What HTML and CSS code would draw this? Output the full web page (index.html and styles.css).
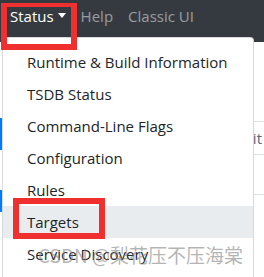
FILE: index.html
```html
<!DOCTYPE html>
<html lang="en">
<head>
<meta charset="utf-8">
<title>Status menu</title>
<link rel="stylesheet" href="styles.css">
</head>
<body>
<div class="page">
  <nav class="navbar">
    <span class="nav-link active">Status<span class="caret"></span></span>
    <span class="nav-link">Help</span>
    <span class="nav-link">Classic UI</span>
  </nav>
  <main class="content">
    <div class="edge">
      <div class="edge-btn edge-btn-a"></div>
      <div class="edge-btn edge-btn-b"></div>
    </div>
    <div class="panel">
      <div class="panel-row row-a"></div>
      <div class="panel-row row-b"><span class="cell-text">Unit</span></div>
      <div class="panel-row row-c"></div>
    </div>
  </main>

  <ul class="dropdown">
    <li class="dropdown-item">Runtime &amp; Build Information</li>
    <li class="dropdown-item">TSDB Status</li>
    <li class="dropdown-item">Command-Line Flags</li>
    <li class="dropdown-item">Configuration</li>
    <li class="dropdown-item">Rules</li>
    <li class="dropdown-item is-active">Targets</li>
    <li class="dropdown-item">Service Discovery</li>
  </ul>

  <div class="mark mark-status"></div>
  <div class="mark mark-targets"></div>
  <div class="watermark">CSDN @梨花压不压海棠</div>
</div>
</body>
</html>
```

FILE: styles.css
```css
* { box-sizing: border-box; }

html, body {
  margin: 0;
  padding: 0;
  background: #ffffff;
}

body {
  font-family: "Open Sans", "Noto Sans", "Noto Sans CJK SC", sans-serif;
  color: #212529;
  width: 264px;
  height: 277px;
  overflow: hidden;
}

.page {
  position: relative;
  width: 264px;
  height: 277px;
  overflow: hidden;
}

.navbar {
  display: flex;
  align-items: flex-start;
  height: 42px;
  padding: 4px 0 0 10px;
  background: #343a40;
}

.nav-link {
  display: inline-flex;
  align-items: center;
  font-size: 15px;
  line-height: 24px;
  color: rgba(255, 255, 255, 0.5);
  white-space: nowrap;
}

.nav-link + .nav-link { margin-left: 15px; }

.nav-link.active { color: #ffffff; }

.caret {
  display: inline-block;
  width: 0;
  height: 0;
  margin-left: 4px;
  margin-top: -2px;
  border-top: 5px solid #ffffff;
  border-left: 4.5px solid transparent;
  border-right: 4.5px solid transparent;
}

.content {
  display: grid;
  grid-template-columns: 2px 1fr;
  padding-top: 76px;
}

.edge {
  display: flex;
  flex-direction: column;
}

.edge-btn { background: #007bff; }
.edge-btn-a { height: 32px; }
.edge-btn-b { height: 22px; margin-top: 40px; }

.panel {
  display: flex;
  flex-direction: column;
  padding-left: 2px;
}

.panel-row { border-bottom: 1px solid #dee2e6; }
.row-a { height: 4px; }
.row-b {
  height: 33px;
  display: flex;
  align-items: center;
  justify-content: flex-end;
  padding-right: 2px;
  font-size: 15px;
  color: #56677a;
}
.row-c { height: 40px; }

.dropdown {
  position: absolute;
  top: 37px;
  left: 2px;
  width: 252px;
  height: 260px;
  margin: 0;
  padding: 8px 0;
  list-style: none;
  background: #ffffff;
  border: 1px solid rgba(0, 0, 0, 0.15);
  border-radius: 4px;
}

.dropdown-item {
  padding: 4px 24px;
  font-size: 15px;
  line-height: 24px;
  color: #212529;
  white-space: nowrap;
}

.dropdown-item.is-active { background: #e9ecef; }

.mark {
  position: absolute;
  border: 6px solid #f0302e;
}

.mark-status {
  left: 1px;
  top: 3px;
  width: 76px;
  height: 47px;
  border-top-width: 4px;
}

.mark-targets {
  left: 13px;
  top: 198px;
  width: 92px;
  height: 41px;
}

.watermark {
  position: absolute;
  left: 38px;
  top: 242px;
  font-family: "Noto Sans CJK SC", sans-serif;
  font-size: 19px;
  line-height: 26px;
  color: rgba(130, 130, 130, 0.6);
  white-space: nowrap;
}
```
